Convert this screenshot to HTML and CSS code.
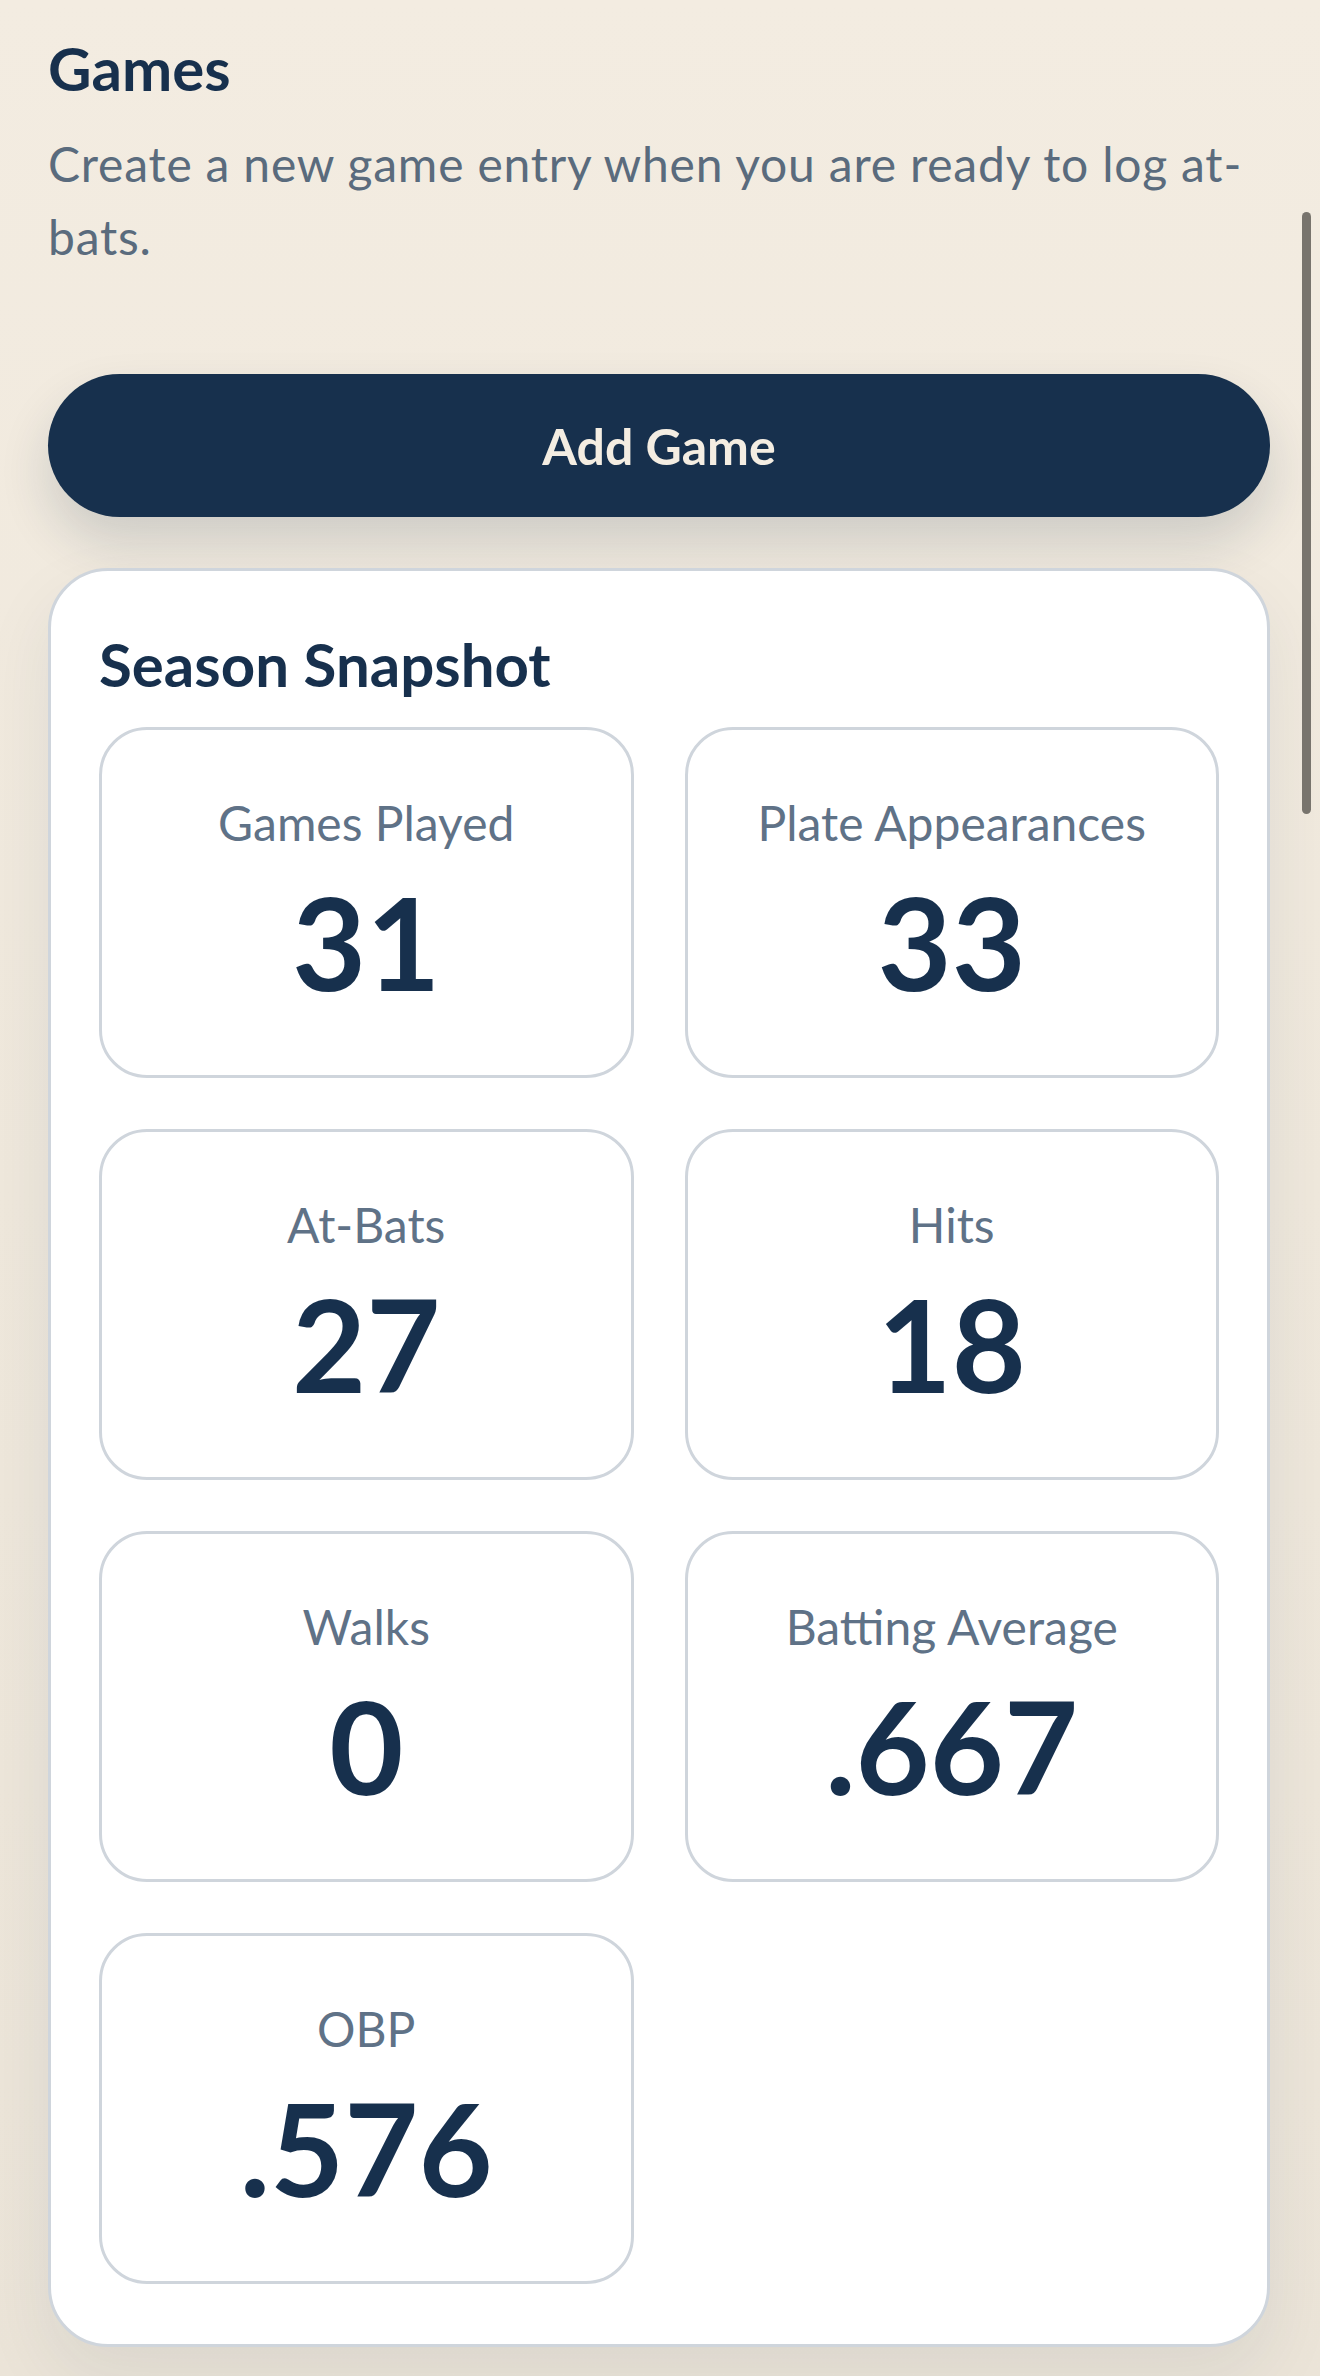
FILE: index.html
```html
<!DOCTYPE html>
<html lang="en">
  <head>
    <meta charset="UTF-8" />
    <title>Games</title>
    <link rel="stylesheet" href="styles.css">
  </head>
  <body>
    <main class="page">
      <section class="games">
        <h1 class="games-title">Games</h1>
        <p class="games-hint">
          Create a new game entry when you are ready to log at-bats.
        </p>
        <button class="add-game" type="button">Add Game</button>
      </section>

      <!-- Season totals -->
      <section class="snapshot">
        <h2 class="snapshot-title">Season Snapshot</h2>
        <div class="stat-grid">
          <div class="stat">
            <span class="stat-label">Games Played</span>
            <span class="stat-value">31</span>
          </div>
          <div class="stat">
            <span class="stat-label">Plate Appearances</span>
            <span class="stat-value">33</span>
          </div>
          <div class="stat">
            <span class="stat-label">At-Bats</span>
            <span class="stat-value">27</span>
          </div>
          <div class="stat">
            <span class="stat-label">Hits</span>
            <span class="stat-value">18</span>
          </div>
          <div class="stat">
            <span class="stat-label">Walks</span>
            <span class="stat-value">0</span>
          </div>
          <div class="stat">
            <span class="stat-label">Batting Average</span>
            <span class="stat-value">.667</span>
          </div>
          <div class="stat">
            <span class="stat-label">OBP</span>
            <span class="stat-value">.576</span>
          </div>
        </div>
      </section>
    </main>
    <div class="scroll-thumb"></div>
  </body>
</html>
```

FILE: styles.css
```css
html {
  background: linear-gradient(180deg, #f3ece1 0%, #efe8dc 50%, #ebe4d8 100%);
  min-height: 100%;
}
body {
  margin: 0;
  padding: 23px 50px 30px 48px;
  font-family: Lato, "Open Sans", sans-serif;
  color: #17304d;
}
.games-title {
  margin: 0;
  font-size: 60px;
  line-height: 90px;
  font-weight: 700;
}
.games-hint {
  margin: 14px 0 0;
  font-size: 48px;
  line-height: 73px;
  letter-spacing: 0.8px;
  color: #5a6b7d;
}
.add-game {
  display: block;
  width: 100%;
  height: 143px;
  margin-top: 101px;
  border: none;
  border-radius: 72px;
  background: #17304d;
  color: #f4ede2;
  font-family: inherit;
  font-size: 50px;
  font-weight: 700;
  box-shadow: 0 26px 50px rgba(23, 48, 77, 0.16);
}
.snapshot {
  margin-top: 51px;
  padding: 48px 48px 60px;
  border: 3px solid #cfd5dc;
  border-radius: 60px;
  background: #fff;
  box-shadow: 0 30px 70px rgba(23, 48, 77, 0.08);
}
.snapshot-title {
  margin: 0 0 18px;
  font-size: 60px;
  line-height: 90px;
  font-weight: 700;
}
.stat-grid {
  display: grid;
  grid-template-columns: 1fr 1fr;
  gap: 51px;
}
.stat {
  display: flex;
  flex-direction: column;
  align-items: center;
  gap: 6px;
  padding: 57px 20px 56px;
  border: 3px solid #cfd5dc;
  border-radius: 48px;
}
.stat-label {
  font-size: 48px;
  line-height: 72px;
  color: #5f7287;
}
.stat-value {
  font-size: 128px;
  line-height: 154px;
  font-weight: 700;
}
.scroll-thumb {
  position: fixed;
  top: 212px;
  right: 9px;
  width: 9px;
  height: 602px;
  border-radius: 5px;
  background: #78746d;
}
```
